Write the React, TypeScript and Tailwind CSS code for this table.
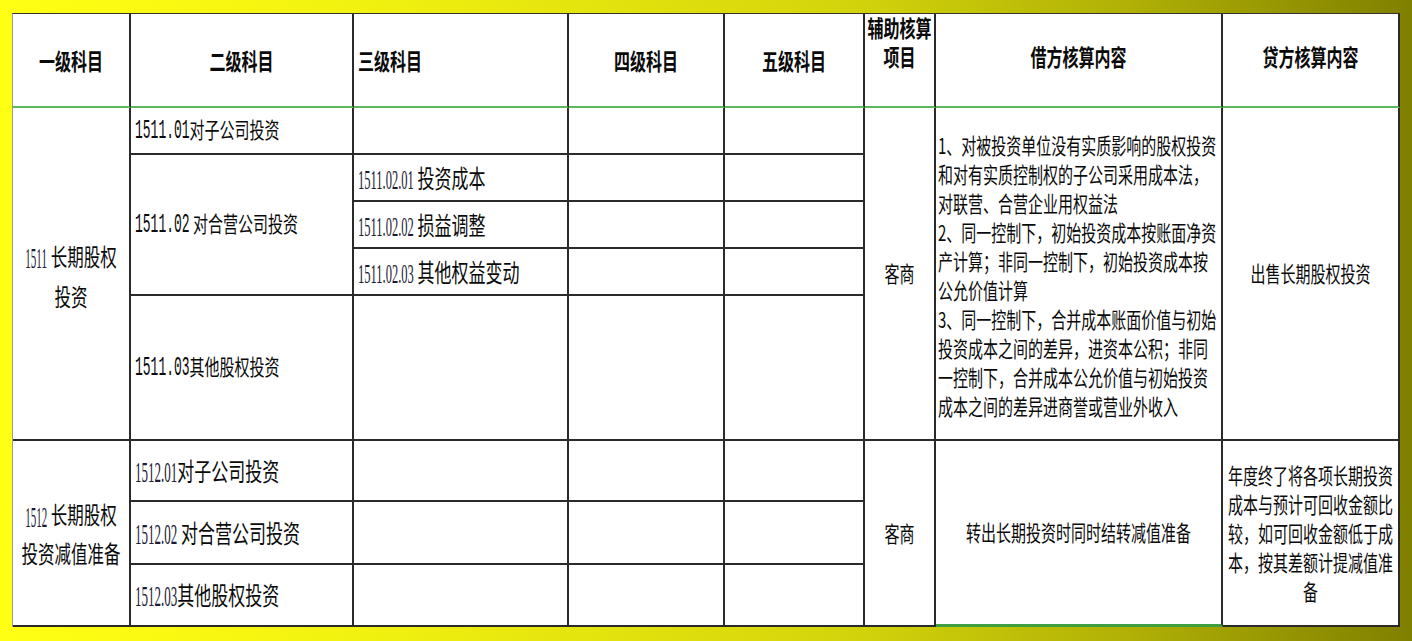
import React from 'react';

// vertical stretch used by the source sheet (glyphs are taller than wide)
function S({ children, className = '' }: { children: React.ReactNode; className?: string }) {
    return <span className={`inline-block origin-center scale-y-[1.45] whitespace-nowrap ${className}`}>{children}</span>;
}

// narrow, tall account codes
function N({ children, className = '' }: { children: React.ReactNode; className?: string }) {
    return <span className={`inline-block origin-center -translate-y-[1.5px] ${className}`}>{children}</span>;
}

const cell = 'flex items-center bg-white border-r-2 border-b-2 border-[#2a2a2a] overflow-hidden';
const head = 'flex items-center bg-white border-r-2 border-b-2 border-[#2a2a2a] border-b-[#5cb85c] font-bold text-[16px]';
const serif = "font-['Liberation_Serif',serif] text-[#1a1a33]";
const mono = "font-['Liberation_Mono',monospace]";

const debitLines = [
    '1、对被投资单位没有实质影响的股权投资',
    '和对有实质控制权的子公司采用成本法，',
    '对联营、合营企业用权益法',
    '2、同一控制下，初始投资成本按账面净资',
    '产计算；非同一控制下，初始投资成本按',
    '公允价值计算',
    '3、同一控制下，合并成本账面价值与初始',
    '投资成本之间的差异，进资本公积；非同',
    '一控制下，合并成本公允价值与初始投资',
    '成本之间的差异进商誉或营业外收入',
];

const creditLines = ['年度终了将各项长期投资', '成本与预计可回收金额比', '较，如可回收金额低于成', '本，按其差额计提减值准', '备'];

function Empty() {
    return <div className={cell} />;
}

function Level3({ code, name }: { code: string; name: string }) {
    return (
        <div className={`${cell} pl-[4px] text-[17px]`}>
            <S>
                <N className={`${serif} text-[12.5px] scale-y-[1.5]`}>{code}</N> {name}
            </S>
        </div>
    );
}

export default function App() {
    return (
        <div className="w-[1412px] h-[641px] pt-[13px] pl-[12px] overflow-hidden bg-[linear-gradient(to_right,#ffff14_0%,#f2f210_25%,#d4d40c_60%,#b0b006_80%,#808000_100%)] font-['Noto_Sans_CJK_SC',sans-serif] text-[#0a0a0a]">
            <div className="grid w-[1388px] grid-cols-[118px_223px_215px_156px_140px_71px_287px_177px] grid-rows-[94px_47px_47px_47px_47px_145px_61px_63px_62px] border-t border-l border-t-[#333] border-l-[#999]">

                {/* header */}
                <div className={`${head} justify-center`}><S>一级科目</S></div>
                <div className={`${head} justify-center`}><S>二级科目</S></div>
                <div className={`${head} pl-[4px]`}><S>三级科目</S></div>
                <div className={`${head} justify-center`}><S>四级科目</S></div>
                <div className={`${head} justify-center`}><S>五级科目</S></div>
                <div className={`${head} !items-start justify-center pt-[7px]`}>
                    <div className="origin-center scale-y-[1.45] leading-[20px] text-center">
                        <div>辅助核算</div>
                        <div>项目</div>
                    </div>
                </div>
                <div className={`${head} !items-start justify-center pt-[31px]`}><S className="leading-[22px]">借方核算内容</S></div>
                <div className={`${head} !items-start justify-center pt-[31px] border-r-0`}><S className="leading-[22px]">贷方核算内容</S></div>

                {/* 1511 */}
                <div className={`${cell} row-span-5 justify-center text-[16.5px]`}>
                    <div className="origin-center scale-y-[1.45] leading-[25px] text-center translate-y-[3px]">
                        <div><N className={`${serif} text-[11px] scale-y-[1.9]`}>1511</N> 长期股权</div>
                        <div>投资</div>
                    </div>
                </div>
                <div className={`${cell} pl-[4px] text-[15px]`}>
                    <S><N className={`${mono} text-[13px] scale-y-[1.45]`}>1511.01</N>对子公司投资</S>
                </div>
                <Empty />
                <Empty />
                <Empty />
                <div className={`${cell} row-span-5 justify-center text-[15px]`}><S>客商</S></div>
                <div className={`${cell} row-span-5 pl-[2px] text-[15px]`}>
                    <div className="origin-center scale-y-[1.45] leading-[20px] whitespace-nowrap translate-y-[2px]">
                        {debitLines.map((l) => (
                            <div key={l}>{l}</div>
                        ))}
                    </div>
                </div>
                <div className={`${cell} row-span-5 justify-center text-[15px] border-r-0`}><S>出售长期股权投资</S></div>

                <div className={`${cell} row-span-3 pl-[4px] text-[15px]`}>
                    <S><N className={`${mono} text-[13px] scale-y-[1.45]`}>1511.02</N> 对合营公司投资</S>
                </div>
                <Level3 code="1511.02.01" name="投资成本" />
                <Empty />
                <Empty />
                <Level3 code="1511.02.02" name="损益调整" />
                <Empty />
                <Empty />
                <Level3 code="1511.02.03" name="其他权益变动" />
                <Empty />
                <Empty />

                <div className={`${cell} pl-[4px] text-[15px]`}>
                    <S><N className={`${mono} text-[13px] scale-y-[1.45]`}>1511.03</N>其他股权投资</S>
                </div>
                <Empty />
                <Empty />
                <Empty />

                {/* 1512 */}
                <div className={`${cell} row-span-3 justify-center text-[16.5px]`}>
                    <div className="origin-center scale-y-[1.45] leading-[24px] text-center">
                        <div><N className={`${serif} text-[11px] scale-y-[1.9]`}>1512</N> 长期股权</div>
                        <div>投资减值准备</div>
                    </div>
                </div>
                <div className={`${cell} pl-[4px] text-[17px]`}>
                    <S><N className={`${serif} text-[13px] scale-y-[1.55]`}>1512.01</N>对子公司投资</S>
                </div>
                <Empty />
                <Empty />
                <Empty />
                <div className={`${cell} row-span-3 justify-center text-[15px]`}><S>客商</S></div>
                <div className={`${cell} row-span-3 justify-center text-[15px] border-b-[3px] border-b-[#3f9e3f]`}>
                    <S>转出长期投资时同时结转减值准备</S>
                </div>
                <div className={`${cell} row-span-3 justify-center text-[15px] border-r-0`}>
                    <div className="origin-center scale-y-[1.45] leading-[20px] text-center whitespace-nowrap">
                        {creditLines.map((l) => (
                            <div key={l}>{l}</div>
                        ))}
                    </div>
                </div>

                <div className={`${cell} pl-[4px] text-[17px]`}>
                    <S><N className={`${serif} text-[13px] scale-y-[1.55]`}>1512.02</N> 对合营公司投资</S>
                </div>
                <Empty />
                <Empty />
                <Empty />
                <div className={`${cell} pl-[4px] text-[17px]`}>
                    <S><N className={`${serif} text-[13px] scale-y-[1.55]`}>1512.03</N>其他股权投资</S>
                </div>
                <Empty />
                <Empty />
                <Empty />
            </div>
        </div>
    );
}
